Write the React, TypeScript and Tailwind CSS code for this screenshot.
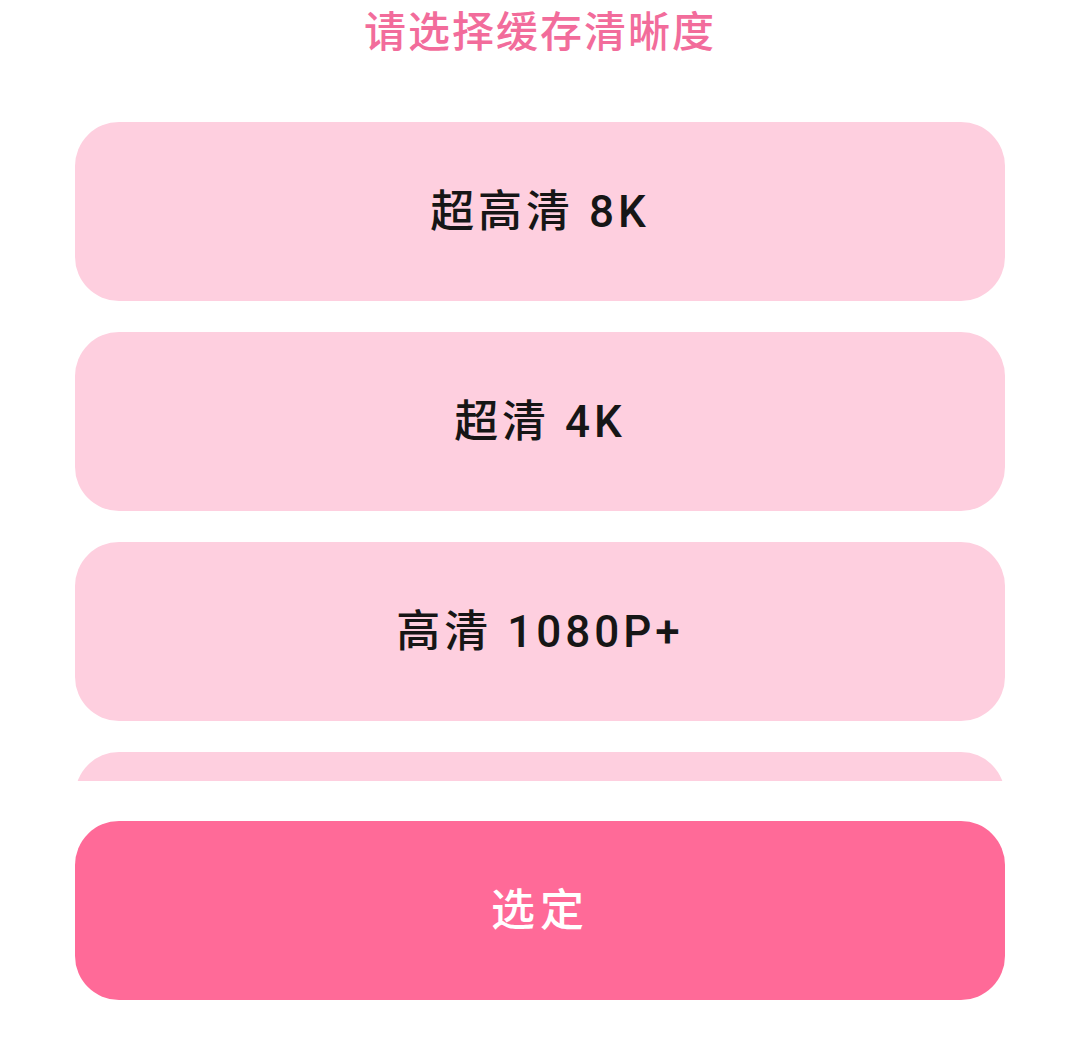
const options = ["超高清 8K", "超清 4K", "高清 1080P+", "高清 1080P"];

export default function App() {
  return (
    <div
      className="w-[1080px] h-[1038px] bg-white flex flex-col overflow-hidden"
      style={{ fontFamily: 'Roboto, "Noto Sans CJK SC", "Noto Sans", sans-serif' }}
    >
      {/* Title */}
      <div className="pt-[8px] h-[122px] text-center">
        <h1 className="text-[42px] leading-[50px] font-medium text-[#f26c9b] tracking-[2px]">
          请选择缓存清晰度
        </h1>
      </div>

      {/* Option list, clipped */}
      <div className="h-[659px] overflow-hidden px-[75px]">
        <div className="flex flex-col gap-[31px]">
          {options.map((opt) => (
            <button
              key={opt}
              className="h-[179px] w-full rounded-[44px] bg-[#fecfdf] text-[44px] font-medium tracking-[4px] text-[#161616] flex items-center justify-center"
            >
              {opt}
            </button>
          ))}
        </div>
      </div>

      {/* Confirm */}
      <div className="px-[75px] pt-[40px]">
        <button className="h-[179px] w-full rounded-[44px] bg-[#ff6a98] text-[44px] font-medium tracking-[5px] text-white flex items-center justify-center">
          选定
        </button>
      </div>
    </div>
  );
}
